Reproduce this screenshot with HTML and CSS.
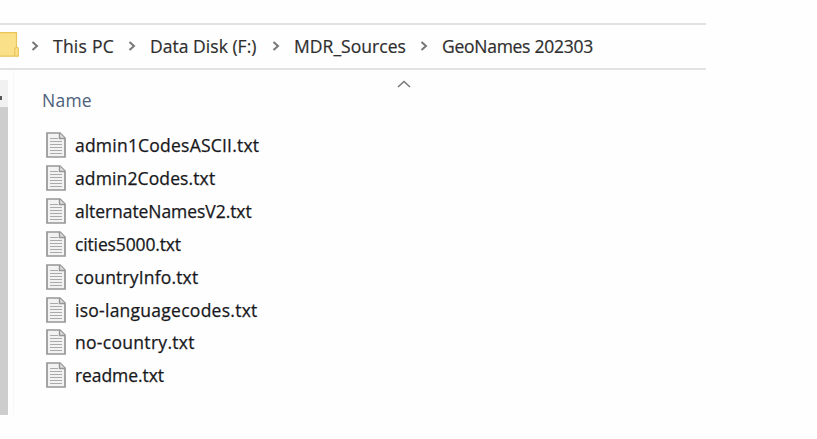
FILE: index.html
```
<!DOCTYPE html>
<html lang="en">
<head>
<meta charset="utf-8">
<title>GeoNames 202303</title>
<link rel="stylesheet" href="styles.css">
</head>
<body>
<svg class="defs" aria-hidden="true">
  <symbol id="doc" viewBox="0 0 20 26">
    <path d="M1 1H14L19 6V25H1Z" fill="#f2f2f2" stroke="#969696" stroke-width="1.7"/>
    <path d="M13.5 1V6.5H19" fill="#ddd" stroke="#969696" stroke-width="1.4"/>
    <path d="M4 6.5H12M4 9.5H16M4 12.5H16M4 15.5H16M4 18.5H16M4 21.5H16" stroke="#aaa" stroke-width="1.2"/>
  </symbol>
  <symbol id="chev" viewBox="0 0 8 10"><path d="M1.5 1L6 5L1.5 9" fill="none" stroke="#777" stroke-width="2"/></symbol>
</svg>
<div class="window">
  <nav class="address">
    <svg class="folder" viewBox="0 0 19 25"><path d="M0 .5H16.5V15L18.5 16V24.5H0Z" fill="#fbe08a"/><path d="M0 .7H16.5V15M0 24.2H18.3V16L16.5 15L14.7 17V24" fill="none" stroke="#e9c65a" stroke-width="1.2"/></svg>
    <svg class="chev"><use href="#chev"/></svg><span class="crumb pc">This PC</span>
    <svg class="chev"><use href="#chev"/></svg><span class="crumb disk">Data Disk (F:)</span>
    <svg class="chev"><use href="#chev"/></svg><span class="crumb sources">MDR_Sources</span>
    <svg class="chev"><use href="#chev"/></svg><span class="crumb geo">GeoNames 202303</span>
  </nav>
  <div class="body">
    <div class="scroll"><div class="scroll-top"><i></i></div></div>
    <main class="files">
      <div class="header"><span class="name">Name</span><svg class="sort" viewBox="0 0 14 8"><path d="M1 7L7 1.5L13 7" fill="none" stroke="#777" stroke-width="1.5"/></svg></div>
      <ul>
        <li><svg><use href="#doc"/></svg><span class="f1">admin1CodesASCII.txt</span></li>
        <li><svg><use href="#doc"/></svg><span class="f2">admin2Codes.txt</span></li>
        <li><svg><use href="#doc"/></svg><span class="f3">alternateNamesV2.txt</span></li>
        <li><svg><use href="#doc"/></svg><span class="f4">cities5000.txt</span></li>
        <li><svg><use href="#doc"/></svg><span class="f5">countryInfo.txt</span></li>
        <li><svg><use href="#doc"/></svg><span class="f6">iso-languagecodes.txt</span></li>
        <li><svg><use href="#doc"/></svg><span class="f7">no-country.txt</span></li>
        <li><svg><use href="#doc"/></svg><span class="f8">readme.txt</span></li>
      </ul>
    </main>
  </div>
</div>
</body>
</html>
```
FILE: styles.css
```
* { box-sizing: border-box; }
body { margin: 0; background: #fefefe; font: 17.5px/24px "Open Sans", "Noto Sans", sans-serif; color: #1c1c1c; overflow: hidden; }
.defs { position: absolute; width: 0; height: 0; }
.window { width: 706px; padding-top: 23px; }
.address { display: flex; align-items: center; height: 47px; border-top: 2px solid #e2e2e2; border-bottom: 2px solid #e2e2e2; white-space: nowrap; }
.folder { width: 19px; height: 25px; margin-right: 12px; flex: none; margin-top: -4px; }
.chev { width: 8px; height: 10px; flex: none; margin-top: -1px; }
.crumb { flex: none; margin-left: 14px; margin-top: -2px; color: #2e2e2e; -webkit-text-stroke: 0.2px; }
.pc { width: 75px; letter-spacing: 0.25px; }
.disk { width: 122px; letter-spacing: 0.03px; }
.sources { width: 126px; letter-spacing: 0.05px; }
.geo { letter-spacing: -0.27px; }
.body { display: flex; height: 345px; }
.scroll { width: 8px; margin-top: 10px; background: #cdcdcd; }
.scroll-top { height: 27px; background: #f1f1f1; padding-top: 16px; }
.scroll-top i { display: block; width: 2px; height: 4px; background: #555; }
.files { flex: 1; margin-left: 5px; border-left: 1px solid #f7f7f7; padding: 10px 0 0 32px; }
.header { display: flex; height: 49px; color: #4c607a; }
.name { width: 352px; padding-top: 8px; margin-left: -4px; letter-spacing: 0.25px; }
.sort { width: 14px; height: 8px; margin-left: 3px; }
ul { list-style: none; margin: 0; padding: 0; }
li { display: flex; align-items: center; height: 32.85px; white-space: nowrap; color: #181820; -webkit-text-stroke: 0.25px; }
li svg { width: 20px; height: 26px; margin-right: 9px; -webkit-text-stroke: 0; }
.f1 { letter-spacing: 0.22px; }
.f2 { letter-spacing: 0.12px; }
.f3 { letter-spacing: -0.06px; }
.f4 { letter-spacing: -0.14px; }
.f5 { letter-spacing: 0.17px; }
.f6 { letter-spacing: 0.26px; }
.f7 { letter-spacing: 0.3px; }
.f8 { letter-spacing: -0.08px; }
```
